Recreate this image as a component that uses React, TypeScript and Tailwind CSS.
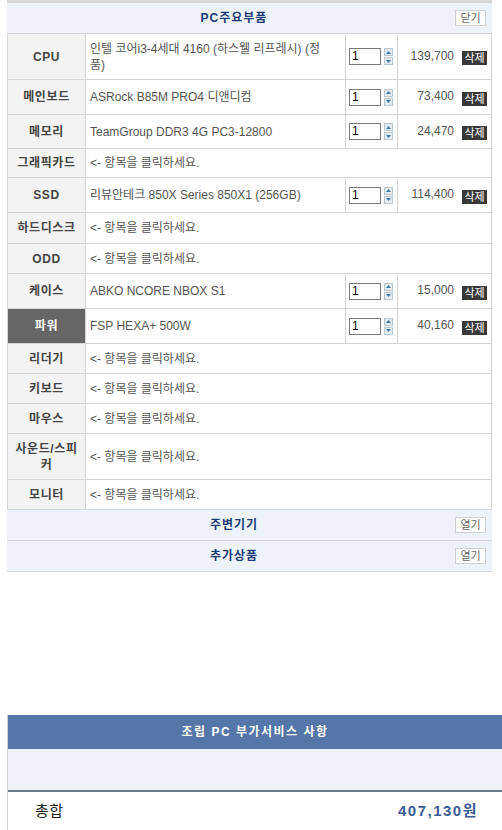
import React from "react";

type Row = {
  label: React.ReactNode;
  name?: React.ReactNode;
  price?: string;
  h: string;
  active?: boolean;
};

const rows: Row[] = [
  { label: "CPU", name: <>인텔 코어i3-4세대 4160 (하스웰 리프레시) (정<br />품)</>, price: "139,700", h: "h-[46px]" },
  { label: "메인보드", name: "ASRock B85M PRO4 디앤디컴", price: "73,400", h: "h-[35px]" },
  { label: "메모리", name: "TeamGroup DDR3 4G PC3-12800", price: "24,470", h: "h-[34px]" },
  { label: "그래픽카드", h: "h-[29px]" },
  { label: "SSD", name: "리뷰안테크 850X Series 850X1 (256GB)", price: "114,400", h: "h-[35px]" },
  { label: "하드디스크", h: "h-[31px]" },
  { label: "ODD", h: "h-[30px]" },
  { label: "케이스", name: "ABKO NCORE NBOX S1", price: "15,000", h: "h-[35px]" },
  { label: "파워", name: "FSP HEXA+ 500W", price: "40,160", h: "h-[35px]", active: true },
  { label: "리더기", h: "h-[30px]" },
  { label: "키보드", h: "h-[30px]" },
  { label: "마우스", h: "h-[30px]" },
  { label: <>사운드/스피<br />커</>, h: "h-[46px]" },
  { label: "모니터", h: "h-[30px]" },
];

const font = "font-['Liberation_Sans','Noto_Sans_CJK_KR',sans-serif]";

function Spinner() {
  return (
    <div className="flex flex-col gap-[1px]">
      <div className="w-[9px] h-[8px] bg-[#e4ecf2] border border-[#b8c6d2] flex items-center justify-center">
        <svg width="5" height="3" viewBox="0 0 5 3"><polygon points="2.5,0 5,3 0,3" fill="#3f78a8" /></svg>
      </div>
      <div className="w-[9px] h-[8px] bg-[#e4ecf2] border border-[#b8c6d2] flex items-center justify-center">
        <svg width="5" height="3" viewBox="0 0 5 3"><polygon points="0,0 5,0 2.5,3" fill="#3f78a8" /></svg>
      </div>
    </div>
  );
}

function SectionBar({ title, btn }: { title: string; btn: string }) {
  return (
    <div className="flex items-center h-[30px] bg-[#eef3fa]">
      <div className="flex-1 text-center pl-[6px] text-[12px] font-bold tracking-[1px] text-[#1b3b78]">{title}</div>
      <div className="mr-[6px] w-[31px] h-[16px] bg-white border border-[#cfcfcf] text-[11px] leading-[14px] text-[#666] text-center">
        {btn}
      </div>
    </div>
  );
}

export default function App() {
  return (
    <div className={`w-[502px] min-h-[830px] bg-white ${font} overflow-hidden`}>
      <div className="ml-[7px] w-[485px] border-t-[3px] border-[#d6d6d6]">
        <SectionBar title="PC주요부품" btn="닫기" />
        <div className="border-t border-x border-[#d4d4d4]">
          {rows.map((r, i) => (
            <div key={i} className={`flex ${r.h} border-b border-[#d4d4d4]`}>
              <div
                className={`w-[78px] shrink-0 border-r border-[#d4d4d4] flex items-center justify-center text-center text-[12px] leading-[16px] font-bold tracking-[0.6px] ${
                  r.active ? "bg-[#666666] text-white" : "bg-[#f3f3f3] text-[#444]"
                }`}
              >
                <span>{r.label}</span>
              </div>
              {r.price ? (
                <>
                  <div className="w-[260px] shrink-0 border-r border-[#d4d4d4] flex items-center pl-[4px] text-[12px] leading-[16px] text-[#555]">
                    <span>{r.name}</span>
                  </div>
                  <div className="w-[52px] shrink-0 border-r border-[#d4d4d4] flex items-center pl-[3px] gap-[3px]">
                    <div className="w-[32px] h-[17px] border border-[#7a7a7a] bg-white text-[12px] leading-[15px] text-black pl-[2px]">1</div>
                    <Spinner />
                  </div>
                  <div className="flex-1 flex items-center justify-end pr-[4px] gap-[8px] text-[12px] text-[#555]">
                    <span className="-mt-[2px]">{r.price}</span>
                    <span className="mt-[3px] w-[25px] h-[14px] bg-[#383838] text-white text-[11px] leading-[14px] text-center">삭제</span>
                  </div>
                </>
              ) : (
                <div className="flex-1 flex items-center pl-[4px] text-[12px] text-[#555]">
                  <span>&lt;- 항목을 클릭하세요.</span>
                </div>
              )}
            </div>
          ))}
        </div>
        <div className="border-b border-[#d4d4d4] h-[31px]">
          <SectionBar title="주변기기" btn="열기" />
        </div>
        <div className="border-b border-[#d4d4d4] h-[31px]">
          <SectionBar title="추가상품" btn="열기" />
        </div>
      </div>

      <div className="h-[143px]" />

      <div className="ml-[7px] w-[495px] border-l border-[#d0d0d0]">
        <div className="h-[34px] bg-[#5676aa] flex items-center justify-center text-white font-bold text-[12px] tracking-[1.5px]">
          조립 PC 부가서비스 사항
        </div>
        <div className="h-[43px] bg-[#eef3fa] border-b-2 border-[#6b7a89]" />
        <div className="flex items-center justify-between h-[39px] pl-[27px] pr-[24px]">
          <span className="text-[15px] text-[#222] tracking-[0.5px]">총합</span>
          <span className="text-[15px] font-bold text-[#3b5a94] tracking-[1.5px]">407,130원</span>
        </div>
      </div>
    </div>
  );
}
